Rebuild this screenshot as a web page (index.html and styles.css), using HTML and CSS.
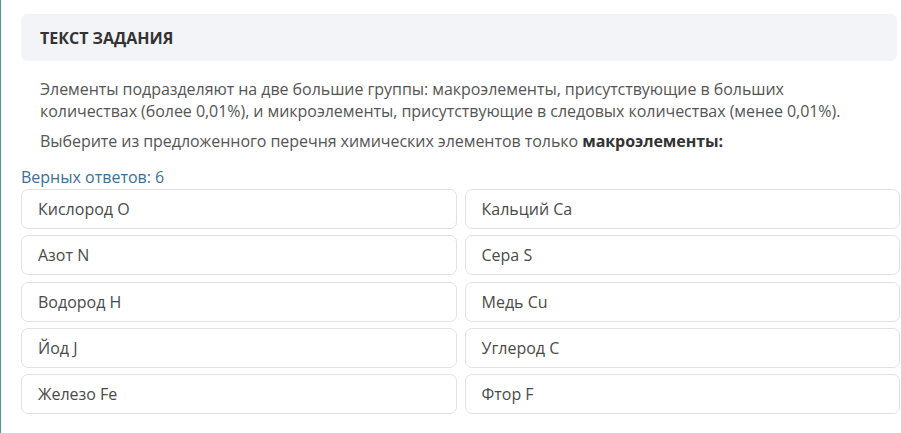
FILE: index.html
```html
<!DOCTYPE html>
<html lang="ru">
<head>
<meta charset="utf-8">
<link rel="stylesheet" href="styles.css">
</head>
<body>
<div class="page">
  <div class="task-head">ТЕКСТ ЗАДАНИЯ</div>
  <div class="task-text">
    <p>Элементы подразделяют на две большие группы: макроэлементы, присутствующие в больших количествах (более 0,01%), и микроэлементы, присутствующие в следовых количествах (менее 0,01%).</p>
    <p>Выберите из предложенного перечня химических элементов только <b>макроэлементы:</b></p>
  </div>
  <div class="count">Верных ответов: 6</div>
  <div class="options">
    <div class="opt">Кислород O</div>
    <div class="opt">Кальций Ca</div>
    <div class="opt">Азот N</div>
    <div class="opt">Сера S</div>
    <div class="opt">Водород H</div>
    <div class="opt">Медь Cu</div>
    <div class="opt">Йод J</div>
    <div class="opt">Углерод C</div>
    <div class="opt">Железо Fe</div>
    <div class="opt">Фтор F</div>
  </div>
</div>
</body>
</html>
```
FILE: styles.css
```css
html, body {
  margin: 0;
  padding: 0;
  background: #ffffff;
}
body {
  font-family: "Open Sans", "Noto Sans", sans-serif;
  color: #555;
  min-height: 433px;
  border-left: 1px solid #4d9c94;
  box-sizing: border-box;
}
.page {
  padding: 14px 1px 0 20px;
}
.task-head {
  height: 47px;
  box-sizing: border-box;
  background: #f3f4f7;
  border-radius: 6px;
  padding: 0 19px;
  display: flex;
  align-items: center;
  font-size: 16px;
  font-weight: 700;
  color: #333;
  margin-right: 3px;
}
.task-text {
  padding: 17px 40px 0 19px;
  font-size: 16px;
  line-height: 22px;
  color: #555;
  letter-spacing: -0.05px;
}
.task-text p {
  margin: 0 0 8px 0;
}
.task-text b {
  color: #333;
}
.count {
  margin-top: 15px;
  font-size: 16px;
  line-height: 20px;
  color: #3a6f98;
}
.options {
  display: grid;
  grid-template-columns: 1fr 1fr;
  column-gap: 8px;
  row-gap: 6.25px;
  margin-top: 2px;
}
.opt {
  height: 40px;
  box-sizing: border-box;
  border: 1px solid #e2e2e2;
  border-radius: 7px;
  padding: 0 16px;
  display: flex;
  align-items: center;
  font-size: 16px;
  color: #4a4a4a;
  background: #fff;
}
```
